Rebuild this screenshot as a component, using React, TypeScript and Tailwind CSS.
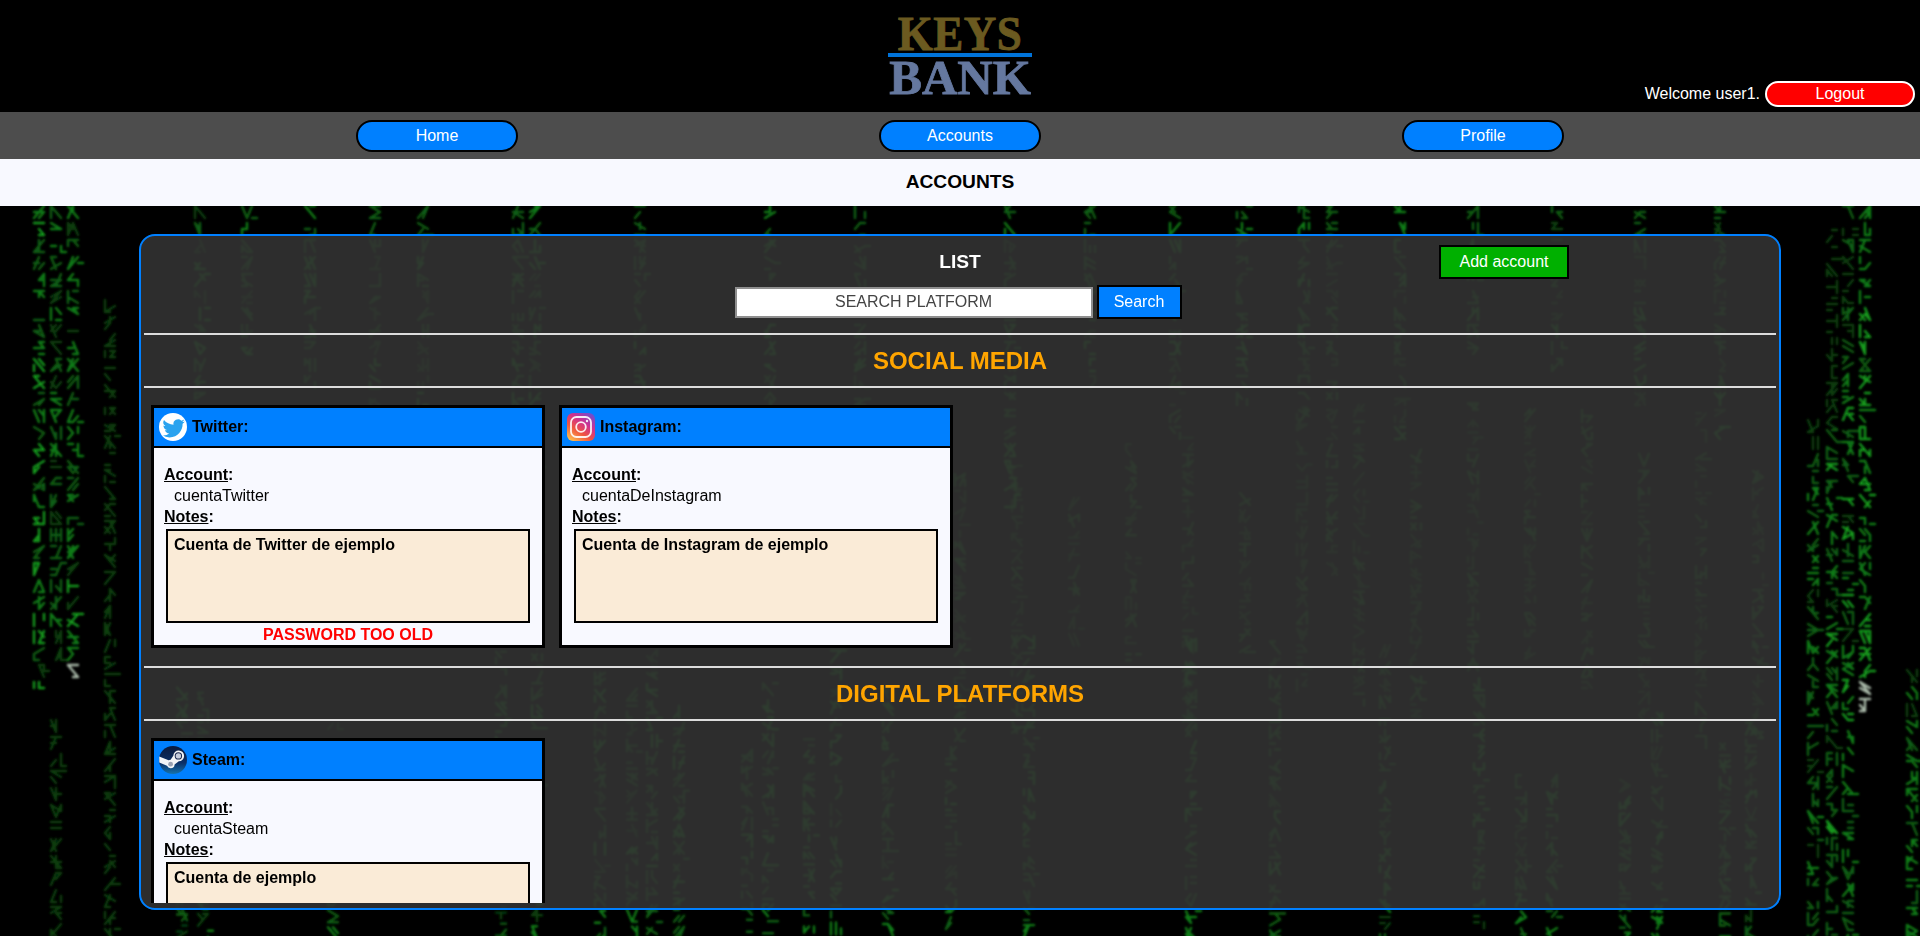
import React from "react";

function rng(seed: number) {
  let s = seed;
  return () => {
    s = (s * 16807) % 2147483647;
    return s / 2147483647;
  };
}

// Texture of the backdrop: abstract blurred strokes in falling columns.
function buildRain() {
  const r = rng(90210);
  const buckets = ["", "", "", "", ""];
  const STEP = 17;
  const addGlyph = (x: number, y: number, bucket: number) => {
    const n = 3 + Math.floor(r() * 2);
    let d = "";
    for (let i = 0; i < n; i++) {
      const x1 = x - 5 + Math.floor(r() * 3) * 5;
      const y1 = y + Math.floor(r() * 3) * 6;
      const x2 = x - 5 + Math.floor(r() * 3) * 5;
      const y2 = y + Math.floor(r() * 3) * 6;
      d += `M${x1} ${y1}L${x2 === x1 && y2 === y1 ? x1 + 5 : x2} ${y2}`;
    }
    buckets[bucket] += d;
  };
  const stream = (x: number, y0: number, y1: number, level: number, whiteFrom = 9999) => {
    for (let y = y0; y < y1; y += STEP) {
      if (y >= whiteFrom) {
        addGlyph(x, y, 4);
        continue;
      }
      const v = level * (0.4 + r() * 0.8);
      addGlyph(x, y, v > 0.85 ? 3 : v > 0.6 ? 2 : v > 0.35 ? 1 : 0);
    }
  };
  // left margin
  stream(39, 206, 690, 0.85);
  stream(56, 206, 660, 0.65);
  stream(73, 206, 680, 0.8, 665);
  stream(56, 720, 936, 0.12);
  stream(110, 300, 936, 0.1);
  // right margin
  stream(1865, 206, 716, 0.9, 680);
  stream(1848, 340, 936, 0.8);
  stream(1832, 430, 936, 0.75);
  stream(1813, 420, 936, 0.55);
  stream(1912, 670, 936, 0.7);
  stream(1848, 206, 340, 0.35);
  stream(1832, 230, 430, 0.3);
  // above the panel
  [200, 247, 310, 375, 423, 518, 535, 640, 770, 860, 1010, 1090, 1175, 1242, 1304, 1332, 1400, 1473, 1557, 1640, 1720].forEach((x) => {
    stream(x, 206, 320 + r() * 260, 0.6);
  });
  // below the panel
  [182, 203, 333, 501, 537, 600, 632, 652, 679, 747, 768, 809, 836, 888, 951, 1029, 1191, 1275, 1385, 1479, 1521, 1552, 1625, 1657, 1725, 1751].forEach((x) => {
    stream(x, 620 + r() * 160, 936, 0.7);
  });
  // seen faintly through the panel
  for (let x = 960; x < 1780; x += 57) {
    stream(x, 400 + r() * 100, 640 + r() * 120, 0.4);
  }
  return buckets;
}

const RAIN = buildRain();

function MatrixRain() {
  return (
    <svg className="fixed inset-0 w-full h-full -z-10 bg-black" viewBox="0 0 1920 936" aria-hidden="true">
      <defs>
        <filter id="rainBlur">
          <feGaussianBlur stdDeviation="1.300" />
        </filter>
      </defs>
      <g filter="url(#rainBlur)" fill="none" strokeWidth="2.400" strokeLinecap="round">
        <path d={RAIN[0]} stroke="#083f0b" />
        <path d={RAIN[1]} stroke="#0c5e12" />
        <path d={RAIN[2]} stroke="#107c18" />
        <path d={RAIN[3]} stroke="#14981e" />
        <path d={RAIN[4]} stroke="#a8b8a8" />
      </g>
    </svg>
  );
}

function Logo() {
  return (
    <div className="flex flex-col items-center w-[144px] font-['Liberation_Serif',serif] font-bold leading-none">
      <div className="text-[#6b5a20] text-[45px] h-[36px] leading-[36px] tracking-[0.5px] scale-y-[1.08] [-webkit-text-stroke:0.8px_#6b5a20]">KEYS</div>
      <div className="w-full h-[4px] bg-[#0073d9] mt-[1px]" />
      <div className="text-[#65789f] text-[49px] h-[36px] leading-[37px] mt-[2px] [-webkit-text-stroke:0.8px_#65789f]">BANK</div>
    </div>
  );
}

function TwitterIcon() {
  return (
    <svg viewBox="0 0 28 28" className="w-[28px] h-[28px] shrink-0">
      <circle cx="14" cy="14" r="14" fill="#fff" />
      <path
        transform="translate(2.800 3.800)"
        fill="#2aa3ef"
        d="M23 4.6c-.8.4-1.700.6-2.600.7.9-.6 1.600-1.400 2-2.500-.9.5-1.900.9-2.900 1.100A4.600 4.600 0 0 0 11.700 8C7.900 7.800 4.500 6 2.200 3.200a4.600 4.600 0 0 0 1.400 6.100c-.7 0-1.400-.2-2-.6 0 2.200 1.500 4.100 3.600 4.600-.7.2-1.400.2-2.100.1.600 1.800 2.300 3.100 4.300 3.200A9.200 9.200 0 0 1 .6 18.500 13 13 0 0 0 7.700 20.600c8.500 0 13.400-7.200 13.100-13.600.9-.6 1.700-1.500 2.200-2.400z"
      />
    </svg>
  );
}

function InstagramIcon() {
  return (
    <svg viewBox="0 0 28 28" className="w-[28px] h-[28px] shrink-0">
      <defs>
        <linearGradient id="igGrad" x1="0.15" y1="1" x2="0.85" y2="0">
          <stop offset="0" stopColor="#fdc04e" />
          <stop offset="0.35" stopColor="#f0553f" />
          <stop offset="0.65" stopColor="#d0308f" />
          <stop offset="1" stopColor="#6a4fd0" />
        </linearGradient>
      </defs>
      <rect width="28" height="28" rx="6" fill="url(#igGrad)" />
      <rect x="4" y="4" width="20" height="20" rx="5.500" fill="none" stroke="#fff" strokeWidth="1.800" opacity=".9" />
      <circle cx="14" cy="14" r="4.800" fill="none" stroke="#fff" strokeWidth="1.800" opacity=".9" />
      <circle cx="20" cy="8" r="1.200" fill="#fff" opacity=".9" />
    </svg>
  );
}

function SteamIcon() {
  return (
    <svg viewBox="0 0 28 28" className="w-[28px] h-[28px] shrink-0">
      <defs>
        <linearGradient id="stGrad" x1="0" y1="0" x2="0" y2="1">
          <stop offset="0" stopColor="#0a1a3d" />
          <stop offset="0.6" stopColor="#0b2f66" />
          <stop offset="1" stopColor="#1573ad" />
        </linearGradient>
      </defs>
      <circle cx="14" cy="14" r="14" fill="url(#stGrad)" />
      <path d="M.3 16.500 8 19.800a4 4 0 0 0 3.600 2.400 4 4 0 0 0 4-3.800l4.200-3.100A5.400 5.400 0 1 0 14.300 9.700l-2.700 4a4 4 0 0 0-2 .5L.2 10.500z" fill="#fff" opacity=".95" />
      <circle cx="19.400" cy="9.900" r="3.700" fill="#16254c" />
      <circle cx="19.400" cy="9.900" r="2.700" fill="#c7cede" />
      <circle cx="11.600" cy="18.200" r="2.400" fill="#16254c" opacity=".4" />
    </svg>
  );
}

function Card({ icon, name, account, notes, warn }: { icon: React.ReactNode; name: string; account: string; notes: string; warn?: string }) {
  return (
    <div className="w-[394px] h-[243px] border-[3px] border-black bg-[#f8f9ff] shrink-0 text-black">
      <div className="h-[40px] bg-[#0080ff] border-b-[2px] border-black flex items-center gap-[5px] pl-[5px] pb-[1px] font-bold text-[16px]">
        {icon}
        <span>{name}:</span>
      </div>
      <div className="pl-[10px] pr-[10px] pt-[16px] text-[16px] leading-[21px]">
        <div className="font-bold"><span className="underline">Account</span>:</div>
        <div className="pl-[10px]">{account}</div>
        <div className="font-bold"><span className="underline">Notes</span>:</div>
        <div className="mx-[2px] mt-[2px] h-[94px] border-[2px] border-black bg-[#faebd7] px-[6px] pt-[3px] font-bold">{notes}</div>
        {warn && <div className="text-center text-[#ff0000] font-bold text-[16px] leading-[20px] mt-[2px]">{warn}</div>}
      </div>
    </div>
  );
}

function Section({ title, children }: { title: string; children: React.ReactNode }) {
  return (
    <section>
      <div className="h-[2px] bg-[#dcdcdc]" />
      <h2 className="h-[51px] flex items-center justify-center text-[24px] font-bold text-[#ffa500]">{title}</h2>
      <div className="h-[2px] bg-[#dcdcdc]" />
      <div className="flex gap-[14px] pl-[7px] pt-[17px] pb-[18px]">{children}</div>
    </section>
  );
}

export default function App() {
  return (
    <div className="h-[936px] overflow-hidden flex flex-col font-['Liberation_Sans',Arial,sans-serif]">
      <MatrixRain />
      <header className="h-[112px] bg-black relative flex justify-center pt-[16px]">
        <Logo />
        <div className="absolute right-[5px] top-[81px] flex items-center text-white text-[16px]">
          <span>Welcome user1.</span>
          <button className="ml-[5px] w-[150px] h-[26px] rounded-[13px] border-[2px] border-white bg-[#ff0000] text-white text-[16px] leading-none">Logout</button>
        </div>
      </header>
      <nav className="h-[47px] bg-[#4d4d4d] flex items-center justify-center gap-[361px]">
        {["Home", "Accounts", "Profile"].map((t) => (
          <button key={t} className="w-[162px] h-[32px] rounded-[16px] border-[2px] border-black bg-[#0080ff] text-white text-[16px]">{t}</button>
        ))}
      </nav>
      <div className="h-[47px] bg-[#f8f9ff] flex items-center justify-center text-[19.200px] font-bold text-black">ACCOUNTS</div>
      <main className="mx-[139px] mt-[28px] h-[676px] rounded-[16px] border-[2px] border-[#0080ff] bg-[#333333]/[0.88] px-[3px] pb-[5px] flex flex-col">
        <div className="flex-1 overflow-hidden">
          <div className="relative h-[97px] flex flex-col items-center pt-[15px]">
            <h1 className="text-white text-[19.200px] font-bold leading-[22px]">LIST</h1>
            <div className="flex items-center gap-[4px] mt-[12px] mr-[4px]">
              <div className="w-[358px] h-[31px] border-[2px] border-[#8f8f8f] bg-white flex items-center justify-center text-[#444] text-[16px]">SEARCH PLATFORM</div>
              <button className="w-[85px] h-[34px] border-[2px] border-black bg-[#0080ff] text-white text-[16px]">Search</button>
            </div>
            <button className="absolute right-[207px] top-[9px] w-[130px] h-[34px] border-[2px] border-black bg-[#00b000] text-white text-[16px]">Add account</button>
          </div>
          <Section title="SOCIAL MEDIA">
            <Card icon={<TwitterIcon />} name="Twitter" account="cuentaTwitter" notes="Cuenta de Twitter de ejemplo" warn="PASSWORD TOO OLD" />
            <Card icon={<InstagramIcon />} name="Instagram" account="cuentaDeInstagram" notes="Cuenta de Instagram de ejemplo" />
          </Section>
          <Section title="DIGITAL PLATFORMS">
            <Card icon={<SteamIcon />} name="Steam" account="cuentaSteam" notes="Cuenta de ejemplo" />
          </Section>
        </div>
      </main>
    </div>
  );
}
